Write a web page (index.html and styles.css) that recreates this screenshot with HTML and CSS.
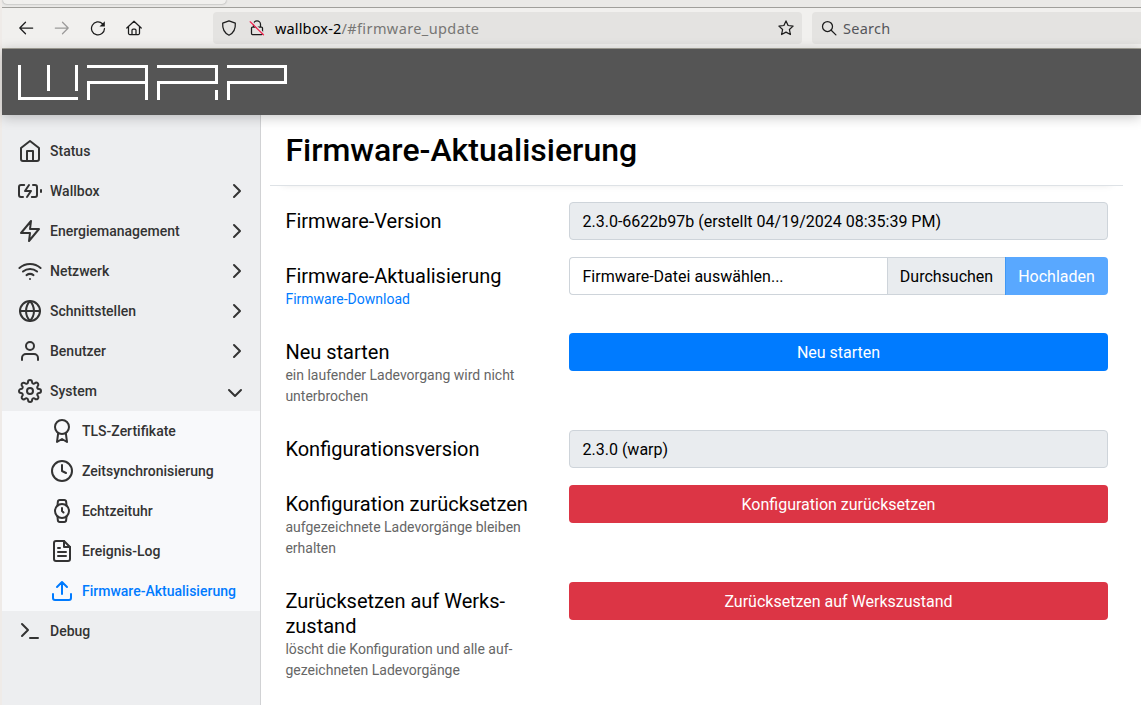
FILE: index.html
```
<!DOCTYPE html>
<html lang="de">
<head>
<meta charset="utf-8">
<title>Firmware-Aktualisierung</title>
<link rel="stylesheet" href="styles.css">
</head>
<body>
<div class="browser">
  <div class="tabstrip"><div class="tab"></div></div>
  <div class="toolbar">
    <div class="tools">
      <svg class="tool" viewBox="0 0 16 16"><path d="M7.500 2.200 1.800 8l5.700 5.800M1.800 8H14.700"/></svg>
      <svg class="tool tool-off" viewBox="0 0 16 16"><path d="M8.500 2.200 14.200 8l-5.700 5.800M14.200 8H1.300"/></svg>
      <svg class="tool" viewBox="0 0 16 16"><path d="M12.500 3.700A6.500 6.500 0 1 0 14.500 8.500"/><path class="solid" d="M14.800 1.200v5.300H9.500z"/></svg>
      <svg class="tool" viewBox="0 0 16 16"><path d="M.8 8 8 1.200 15.200 8M2.500 7v6.200a1.300 1.300 0 0 0 1.300 1.300h8.400a1.300 1.300 0 0 0 1.300-1.300V7M6 14.500V10.300a1.200 1.200 0 0 1 1.200-1.200h1.600a1.200 1.200 0 0 1 1.200 1.200v4.200"/></svg>
    </div>
    <div class="urlbar">
      <svg class="tool" viewBox="0 0 16 16"><path d="M8 .8 14.300 3.200C14.700 8.500 12.500 13 8 15.200 3.500 13 1.300 8.500 1.700 3.200z"/></svg>
      <svg class="tool lock" viewBox="0 0 16 16"><path d="M4.500 7V4.300a3.500 3.500 0 0 1 7 0V7M3.500 7h9a1 1 0 0 1 1 1v5.500a1 1 0 0 1-1 1h-9a1 1 0 0 1-1-1V8a1 1 0 0 1 1-1z"/><path class="halo" d="M2.500 1.200l13 13"/><path class="slash" d="M1.200 1.800l13.300 13"/></svg>
      <span class="url"><b>wallbox-2</b>/#firmware_update</span>
      <svg class="tool star" viewBox="0 0 16 16"><path d="M8 .9l2.100 4.600 5 .6-3.700 3.400 1 5L8 12.100l-4.400 2.400 1-5L.9 6.100l5-.6z"/></svg>
    </div>
    <div class="searchbar">
      <svg class="tool" viewBox="0 0 16 16"><circle cx="6.500" cy="6.500" r="5"/><path d="M10.200 10.200l4.700 4.700"/></svg>
      <span>Search</span>
    </div>
  </div>
</div>

<div class="page">
  <header class="navbar">
    <svg class="logo" viewBox="0 0 270 36" width="270" height="36">
      <path d="M1.500 0V33.500H60M30.500 0v26M58.500 0v26"/>
      <path d="M69 1.500H128.500V35M128.500 17.500H70.500V35"/>
      <path d="M139 1.500h59.500v16H140.500V35M198.500 25v10"/>
      <path d="M209 1.500h58.500v16H210.500V35"/>
    </svg>
  </header>
  <div class="body">
    <nav class="sidebar">
      <a class="item"><svg class="icon" viewBox="0 0 24 24"><path d="M3 9l9-7 9 7v11a2 2 0 0 1-2 2H5a2 2 0 0 1-2-2z"/><path d="M9 22V12h6v10"/></svg><span>Status</span></a>
      <a class="item"><svg class="icon" viewBox="0 0 24 24"><path d="M5 18H3a2 2 0 0 1-2-2V8a2 2 0 0 1 2-2h3.190M15 6h2a2 2 0 0 1 2 2v8a2 2 0 0 1-2 2h-3.190M23 13v-2"/><path d="M11 6l-4 6h6l-4 6"/></svg><span>Wallbox</span><svg class="icon chevron" viewBox="0 0 24 24"><path d="M9 18l6-6-6-6"/></svg></a>
      <a class="item"><svg class="icon" viewBox="0 0 24 24"><path d="M13 2L3 14h9l-1 8 10-12h-9z"/></svg><span>Energiemanagement</span><svg class="icon chevron" viewBox="0 0 24 24"><path d="M9 18l6-6-6-6"/></svg></a>
      <a class="item"><svg class="icon" viewBox="0 0 24 24"><path d="M5 12.550a11 11 0 0 1 14.080 0M1.420 9a16 16 0 0 1 21.160 0M8.530 16.110a6 6 0 0 1 6.950 0M12 20h.01"/></svg><span>Netzwerk</span><svg class="icon chevron" viewBox="0 0 24 24"><path d="M9 18l6-6-6-6"/></svg></a>
      <a class="item"><svg class="icon" viewBox="0 0 24 24"><circle cx="12" cy="12" r="10"/><path d="M2 12h20M12 2a15.300 15.300 0 0 1 4 10 15.300 15.300 0 0 1-4 10 15.300 15.300 0 0 1-4-10 15.300 15.300 0 0 1 4-10z"/></svg><span>Schnittstellen</span><svg class="icon chevron" viewBox="0 0 24 24"><path d="M9 18l6-6-6-6"/></svg></a>
      <a class="item"><svg class="icon" viewBox="0 0 24 24"><path d="M20 21v-2a4 4 0 0 0-4-4H8a4 4 0 0 0-4 4v2"/><circle cx="12" cy="7" r="4"/></svg><span>Benutzer</span><svg class="icon chevron" viewBox="0 0 24 24"><path d="M9 18l6-6-6-6"/></svg></a>
      <a class="item"><svg class="icon" viewBox="0 0 24 24"><circle cx="12" cy="12" r="3"/><path d="M19.400 15a1.650 1.650 0 0 0 .33 1.820l.06.06a2 2 0 0 1 0 2.830 2 2 0 0 1-2.830 0l-.06-.06a1.650 1.650 0 0 0-1.820-.33 1.650 1.650 0 0 0-1 1.510V21a2 2 0 0 1-2 2 2 2 0 0 1-2-2v-.09A1.650 1.650 0 0 0 9 19.400a1.650 1.650 0 0 0-1.820.33l-.06.06a2 2 0 0 1-2.830 0 2 2 0 0 1 0-2.830l.06-.06a1.650 1.650 0 0 0 .33-1.820 1.650 1.650 0 0 0-1.510-1H3a2 2 0 0 1-2-2 2 2 0 0 1 2-2h.09A1.650 1.650 0 0 0 4.600 9a1.650 1.650 0 0 0-.33-1.820l-.06-.06a2 2 0 0 1 0-2.830 2 2 0 0 1 2.830 0l.06.06a1.650 1.650 0 0 0 1.820.33H9a1.650 1.650 0 0 0 1-1.510V3a2 2 0 0 1 2-2 2 2 0 0 1 2 2v.09a1.650 1.650 0 0 0 1 1.510 1.650 1.650 0 0 0 1.820-.33l.06-.06a2 2 0 0 1 2.830 0 2 2 0 0 1 0 2.830l-.06.06a1.650 1.650 0 0 0-.33 1.820V9a1.650 1.650 0 0 0 1.510 1H21a2 2 0 0 1 2 2 2 2 0 0 1-2 2h-.09a1.650 1.650 0 0 0-1.510 1z"/></svg><span>System</span><svg class="icon chevron open" viewBox="0 0 24 24"><path d="M6 9l6 6 6-6"/></svg></a>
      <div class="submenu">
        <a class="item"><svg class="icon" viewBox="0 0 24 24"><circle cx="12" cy="8" r="7"/><path d="M8.210 13.890L7 23l5-3 5 3-1.210-9.120"/></svg><span>TLS-Zertifikate</span></a>
        <a class="item"><svg class="icon" viewBox="0 0 24 24"><circle cx="12" cy="12" r="10"/><path d="M12 6v6l4 2"/></svg><span>Zeitsynchronisierung</span></a>
        <a class="item"><svg class="icon" viewBox="0 0 24 24"><circle cx="12" cy="12" r="7"/><path d="M12 9v3l1.500 1.500M16.510 17.350l-.35 3.830a2 2 0 0 1-2 1.820H9.830a2 2 0 0 1-2-1.820l-.35-3.830m.01-10.700l.35-3.830A2 2 0 0 1 9.830 1h4.350a2 2 0 0 1 2 1.820l.35 3.830"/></svg><span>Echtzeituhr</span></a>
        <a class="item"><svg class="icon" viewBox="0 0 24 24"><path d="M14 2H6a2 2 0 0 0-2 2v16a2 2 0 0 0 2 2h12a2 2 0 0 0 2-2V8z"/><path d="M14 2v6h6M16 13H8M16 17H8M10 9H8"/></svg><span>Ereignis-Log</span></a>
        <a class="item active"><svg class="icon" viewBox="0 0 24 24"><path d="M21 15v4a2 2 0 0 1-2 2H5a2 2 0 0 1-2-2v-4M17 8l-5-5-5 5M12 3v12"/></svg><span>Firmware-Aktualisierung</span></a>
      </div>
      <a class="item"><svg class="icon" viewBox="0 0 24 24"><path d="M4 17l6-6-6-6M12 19h8"/></svg><span>Debug</span></a>
    </nav>
    <main class="content">
      <div class="heading"><h1>Firmware-Aktualisierung</h1></div>
      <div class="row">
        <div class="label">Firmware-Version</div>
        <div class="field readonly">2.3.0-6622b97b (erstellt 04/19/2024 08:35:39 PM)</div>
      </div>
      <div class="row">
        <div class="label">Firmware-Aktualisierung<a class="hint link">Firmware-Download</a></div>
        <div class="group">
          <div class="file">Firmware-Datei auswählen...</div>
          <div class="browse">Durchsuchen</div>
          <button class="upload">Hochladen</button>
        </div>
      </div>
      <div class="row">
        <div class="label">Neu starten<small class="hint">ein laufender Ladevorgang wird nicht unterbrochen</small></div>
        <button class="btn primary">Neu starten</button>
      </div>
      <div class="row">
        <div class="label">Konfigurationsversion</div>
        <div class="field readonly">2.3.0 (warp)</div>
      </div>
      <div class="row">
        <div class="label">Konfiguration zurücksetzen<small class="hint">aufgezeichnete Ladevorgänge bleiben erhalten</small></div>
        <button class="btn danger">Konfiguration zurücksetzen</button>
      </div>
      <div class="row">
        <div class="label">Zurücksetzen auf Werks&shy;zustand<small class="hint">löscht die Konfiguration und alle auf&shy;gezeichneten Ladevorgänge</small></div>
        <button class="btn danger">Zurücksetzen auf Werkszustand</button>
      </div>
    </main>
  </div>
</div>
</body>
</html>
```
FILE: styles.css
```
* { box-sizing: border-box; }
html, body { height: 100%; }
body {
  margin: 0;
  padding-left: 2px;
  display: flex;
  flex-direction: column;
  overflow: hidden;
  background: #efebe8;
  color: #000;
  font: 16px/24px Roboto, sans-serif;
}
svg { display: block; fill: none; stroke: currentColor; flex: none; }
button { font: inherit; margin: 0; }

/* Browser chrome */
.browser { flex: none; font-family: "Noto Sans", sans-serif; font-size: 14.5px; }
.tabstrip { height: 8px; background: #eae9e7; border-bottom: 1px solid #a09f9b; }
.tab { width: 223px; height: 4px; margin-left: 1px; background: #f1f0ee; border-radius: 0 0 4px 4px; box-shadow: 0 0 2px #888; }
.toolbar { display: flex; height: 41px; padding-top: 4px; background: #f1f0ee; border-bottom: 1px solid #a5a399; }
.tools { display: flex; gap: 20px; width: 211px; height: 32px; padding-left: 16px; align-items: center; }
.tool { width: 16px; height: 16px; color: #1c1c1c; stroke-width: 1.25; stroke-linejoin: round; stroke-linecap: round; }
.tool-off { color: #9b9a99; }
.solid { fill: currentColor; stroke: none; }
.halo { stroke: #e4e3e1; stroke-width: 1.5; }
.slash { stroke: #f52a55; }
.urlbar, .searchbar { display: flex; align-items: center; height: 32px; background: #e4e3e1; border-radius: 4px; }
.urlbar { width: 589px; padding: 0 8px; }
.lock { margin-left: 12px; }
.url { margin-left: 10px; color: #777674; letter-spacing: .4px; white-space: nowrap; }
.url b { font-weight: 400; color: #000; letter-spacing: .15px; }
.star { margin-left: auto; }
.searchbar { flex: 1; margin-left: 10px; padding-left: 9px; gap: 6px; color: #55565b; border-radius: 4px 0 0 4px; letter-spacing: .25px; }

/* Web interface */
.page { flex: 1; min-height: 0; display: flex; flex-direction: column; background: #fff; }
.navbar { flex: none; position: relative; height: 66px; padding: 16px; background: #555; box-shadow: 0 2px 12px rgba(0, 0, 0, .24); }
.logo { color: #fff; stroke-width: 3; }
.body { flex: 1; display: flex; min-height: 0; }
.sidebar { flex: none; width: 259px; padding-top: 16px; background: #edeef0; border-right: 1px solid #d1d2d4; font-size: 14px; font-weight: 500; color: #333; }
.item { display: flex; align-items: center; height: 40px; padding: 0 11px 0 16px; gap: 8px; }
.icon { width: 24px; height: 24px; stroke-width: 2; stroke-linecap: round; stroke-linejoin: round; }
.chevron { margin-left: auto; }
.open { margin-right: 2px; margin-top: 4px; }
.submenu { background: #f8f9fb; }
.submenu .item { padding-left: 48px; }
.item.active { color: #007bff; }

.content { flex: 1; min-width: 0; padding: 0 18px 0 9px; }
.heading { height: 71px; padding: 16px 15.400px 0; margin-bottom: 16px; border-bottom: 1px solid #dee2e6; box-shadow: 0 10px 8px -12px rgba(0, 0, 0, .13); }
h1 { margin: 0; font-size: 32px; line-height: 38px; font-weight: 500; }
.row { display: grid; grid-template-columns: 254px 539px; column-gap: 30px; align-items: start; padding: 0 15px; margin-bottom: 16px; }
.label { padding: 7px 0 7px .4px; font-size: 20px; line-height: 25px; }
.hint { display: block; font-size: 14px; line-height: 21px; color: #666; }
.link { color: #007bff; }
.field { height: 38px; padding: 7px 12.500px 5px; border: 1px solid #ced4da; border-radius: 4px; }
.readonly { background: #e9ecef; }
.btn { height: 38px; padding: 2px 12px 0; border: 0; border-radius: 4px; color: #fff; }
.primary { background: #007bff; }
.danger { background: #dc3545; }
.group { display: flex; height: 38px; }
.file { flex: 1; padding: 7px 12.500px 5px; border: 1px solid #ced4da; border-right: 0; border-radius: 4px 0 0 4px; }
.browse { width: 118px; padding: 7px 0 5px; text-align: center; background: #e9ecef; border: 1px solid #ced4da; border-right: 0; }
.upload { width: 103px; padding: 2px 1px 0 0; border: 0; border-left: 1px solid #3f98f5; border-radius: 0 4px 4px 0; background: #59a8ff; color: #fff; }
```
